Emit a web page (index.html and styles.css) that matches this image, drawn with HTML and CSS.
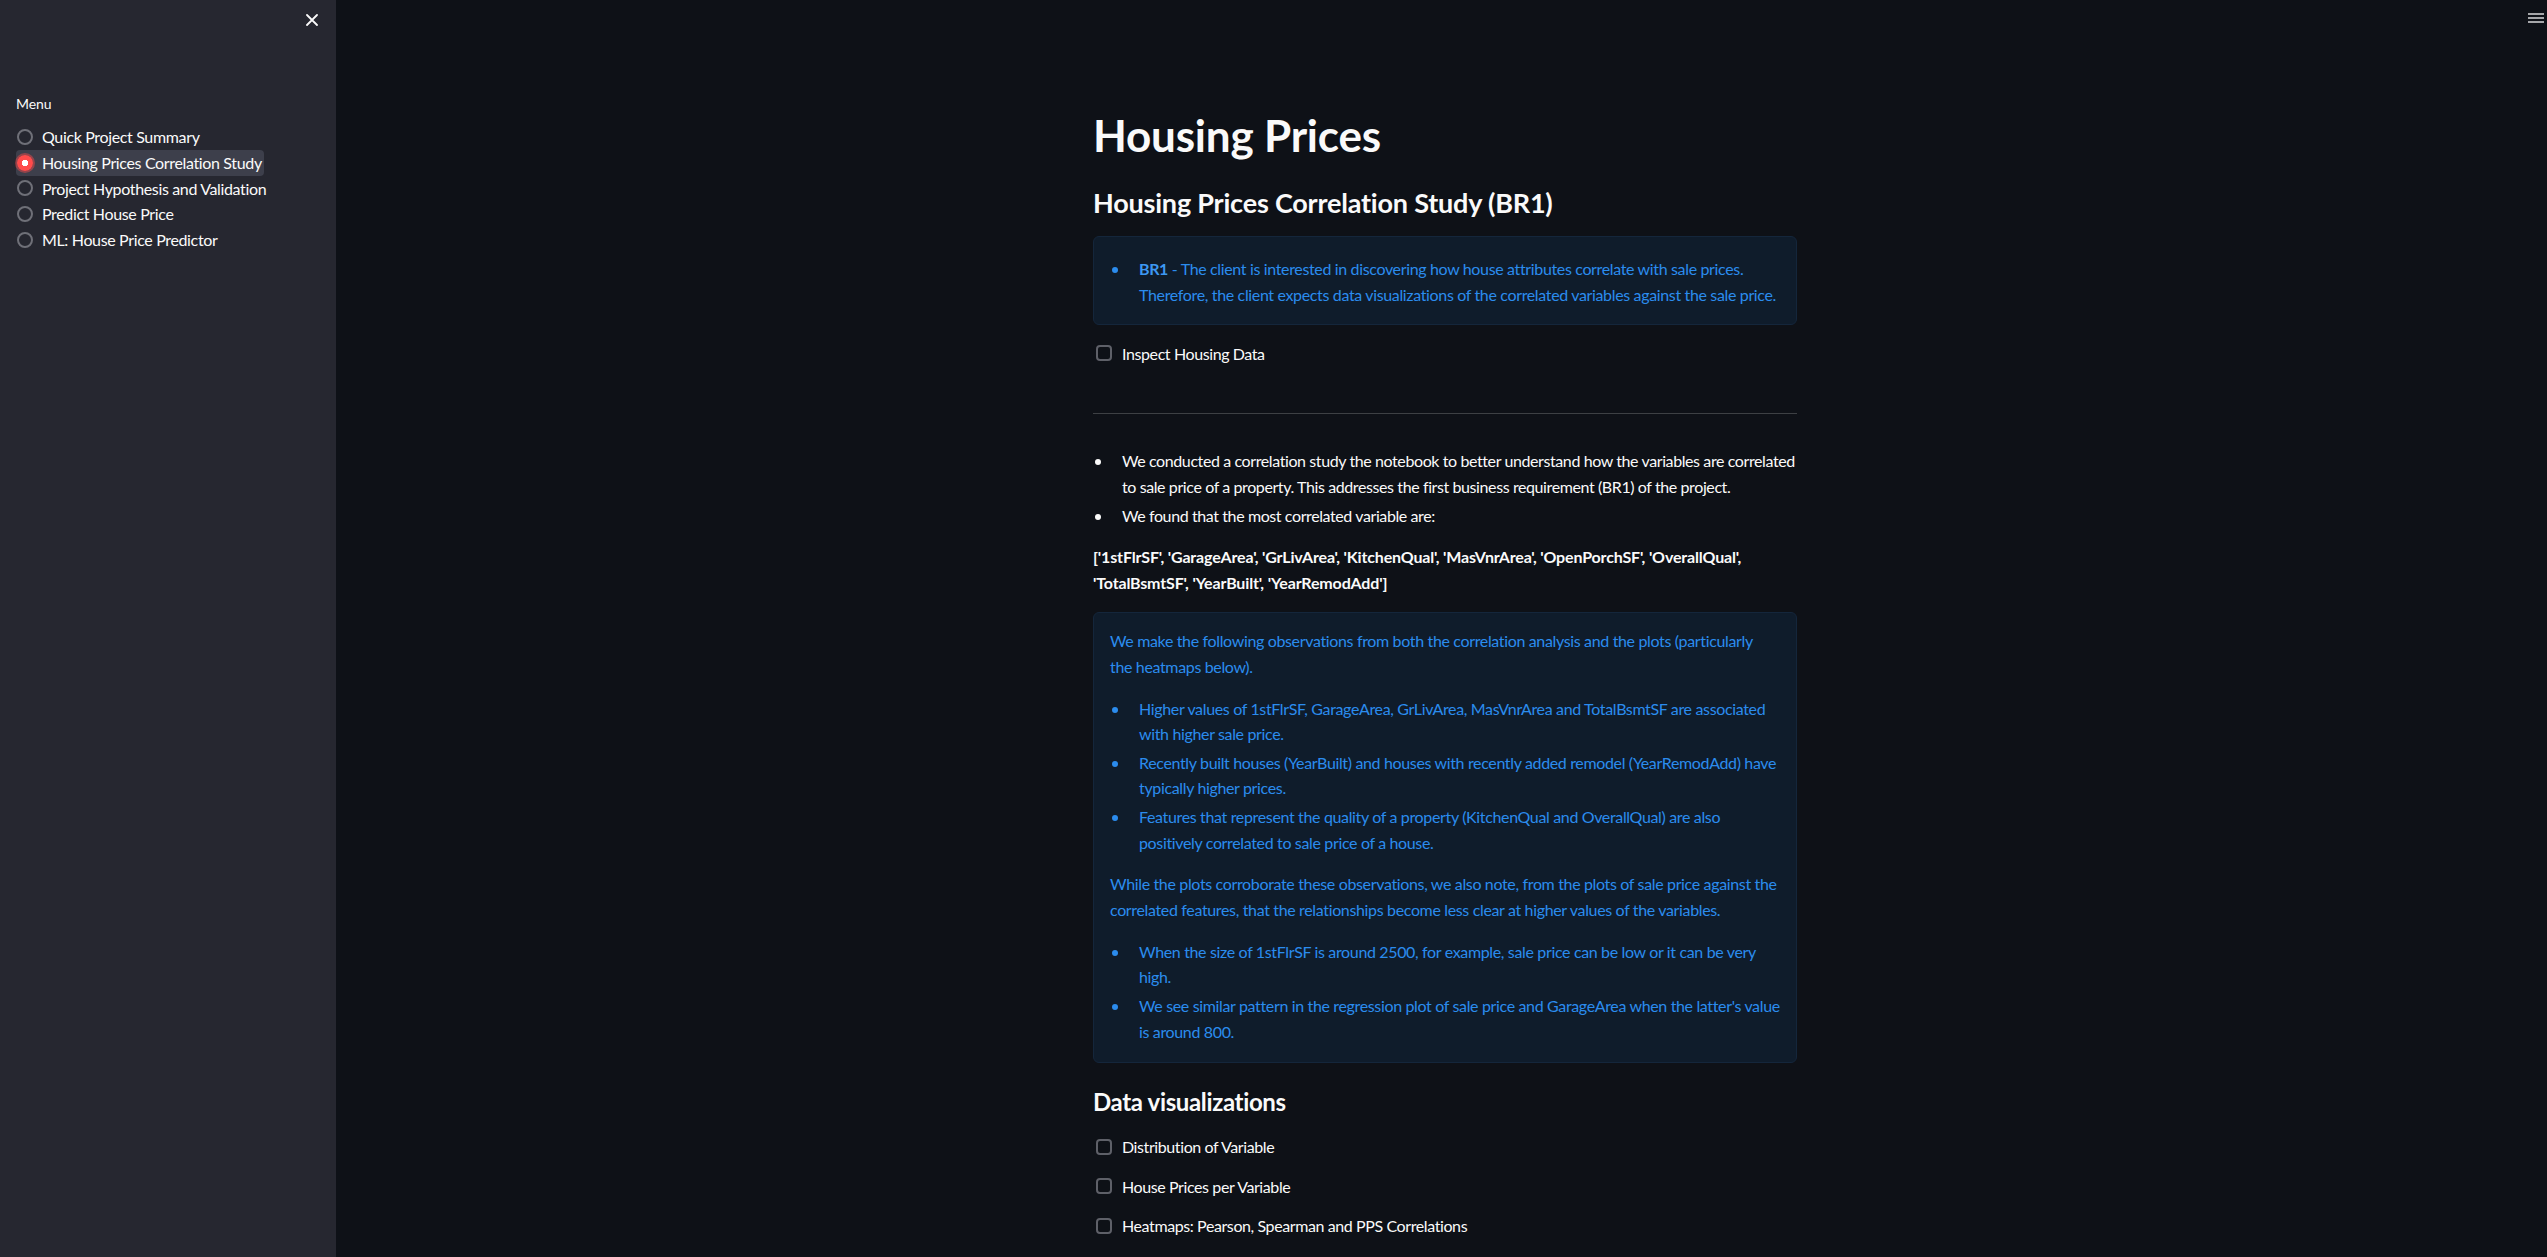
FILE: index.html
```html
<!DOCTYPE html>
<html lang="en">
<head>
<meta charset="utf-8">
<title>Housing Prices</title>
<link rel="stylesheet" href="styles.css">
</head>
<body>
<div class="app">
  <aside class="sidebar">
    <div class="sidebar-head">
      <button class="close-btn" aria-label="Close sidebar">
        <svg width="12" height="12" viewBox="0 0 12 12"><path d="M1 1 L11 11 M11 1 L1 11" stroke="#fafafa" stroke-width="1.8" stroke-linecap="round" fill="none"/></svg>
      </button>
    </div>
    <div class="menu-label">Menu</div>
    <div class="radio-group">
      <div class="radio-row"><label class="radio"><span class="radio-dot"></span><span>Quick Project Summary</span></label></div>
      <div class="radio-row"><label class="radio radio-on"><span class="radio-dot"></span><span>Housing Prices Correlation Study</span></label></div>
      <div class="radio-row"><label class="radio"><span class="radio-dot"></span><span>Project Hypothesis and Validation</span></label></div>
      <div class="radio-row"><label class="radio"><span class="radio-dot"></span><span>Predict House Price</span></label></div>
      <div class="radio-row"><label class="radio"><span class="radio-dot"></span><span>ML: House Price Predictor</span></label></div>
    </div>
  </aside>
  <main class="main">
    <button class="menu-btn" aria-label="Main menu">
      <svg width="16" height="12" viewBox="0 0 16 12"><path d="M0 1 H16 M0 5 H16 M0 9 H16" stroke="#d8d8da" stroke-width="1.6" fill="none"/></svg>
    </button>
    <div class="block">
      <h1 class="title">Housing Prices</h1>
      <h2 class="header">Housing Prices Correlation Study (BR1)</h2>
      <div class="alert alert-first">
        <ul class="list">
          <li><span><strong>BR1</strong> - The client is interested in discovering how house attributes correlate with sale prices.<br>Therefore, the client expects data visualizations of the correlated variables against the sale price.</span></li>
        </ul>
      </div>
      <label class="check check-first"><span class="check-box"></span><span>Inspect Housing Data</span></label>
      <hr class="rule">
      <ul class="list list-main">
        <li><span>We conducted a correlation study the notebook to better understand how the variables are correlated<br>to sale price of a property. This addresses the first business requirement (BR1) of the project.</span></li>
        <li><span>We found that the most correlated variable are:</span></li>
      </ul>
      <p class="vars">['1stFlrSF', 'GarageArea', 'GrLivArea', 'KitchenQual', 'MasVnrArea', 'OpenPorchSF', 'OverallQual',<br>'TotalBsmtSF', 'YearBuilt', 'YearRemodAdd']</p>
      <div class="alert alert-second">
        <p>We make the following observations from both the correlation analysis and the plots (particularly<br>the heatmaps below).</p>
        <ul class="list">
          <li><span>Higher values of 1stFlrSF, GarageArea, GrLivArea, MasVnrArea and TotalBsmtSF are associated<br>with higher sale price.</span></li>
          <li><span>Recently built houses (YearBuilt) and houses with recently added remodel (YearRemodAdd) have<br>typically higher prices.</span></li>
          <li><span>Features that represent the quality of a property (KitchenQual and OverallQual) are also<br>positively correlated to sale price of a house.</span></li>
        </ul>
        <p>While the plots corroborate these observations, we also note, from the plots of sale price against the<br>correlated features, that the relationships become less clear at higher values of the variables.</p>
        <ul class="list">
          <li><span>When the size of 1stFlrSF is around 2500, for example, sale price can be low or it can be very<br>high.</span></li>
          <li><span>We see similar pattern in the regression plot of sale price and GarageArea when the latter's value<br>is around 800.</span></li>
        </ul>
      </div>
      <h3 class="subheader">Data visualizations</h3>
      <div class="checks">
        <label class="check"><span class="check-box"></span><span>Distribution of Variable</span></label>
        <label class="check"><span class="check-box"></span><span>House Prices per Variable</span></label>
        <label class="check"><span class="check-box"></span><span>Heatmaps: Pearson, Spearman and PPS Correlations</span></label>
      </div>
    </div>
  </main>
</div>
</body>
</html>
```
FILE: styles.css
```css
* { box-sizing: border-box; }
html, body { margin: 0; height: 100%; }
body {
  background: #0e1117;
  color: #fafafa;
  font-family: Lato, "Liberation Sans", sans-serif;
  font-size: 16px;
  line-height: 25.6px;
  letter-spacing: -0.4px;
  overflow: hidden;
}
.app { display: flex; height: 100vh; }

/* Sidebar */
.sidebar {
  width: 336px;
  flex: none;
  background: #262730;
  padding: 0 16px;
}
.sidebar-head {
  height: 40px;
  display: flex;
  justify-content: flex-end;
  align-items: center;
  margin-right: -4px;
}
.close-btn {
  width: 24px; height: 24px;
  display: flex; align-items: center; justify-content: center;
  background: none; border: 0; padding: 0;
}
.menu-label {
  margin-top: 53px;
  font-size: 14px;
  line-height: 22.4px;
  letter-spacing: -0.1px;
}
.radio-group { margin-top: 9px; display: flex; flex-direction: column; }
.radio-row { height: 25.6px; display: flex; }
.radio {
  display: inline-flex;
  align-items: center;
  gap: 9px;
  padding: 0 2px 0 1px;
  border-radius: 4px;
  font-size: 16px;
  letter-spacing: -0.35px;
}
.radio-dot {
  width: 16px; height: 16px;
  border-radius: 50%;
  border: 2px solid #6f7078;
  background: #262730;
  flex: none;
}
.radio-on { background: #3d3f4b; }
.radio-on .radio-dot {
  border: 0;
  background: radial-gradient(circle, #ffffff 0 3px, #ff4b4b 3.5px);
  box-shadow: 0 0 0 2px rgba(255, 75, 75, 0.45);
}

/* Main */
.main {
  flex: 1;
  position: relative;
  display: flex;
  justify-content: center;
  padding-left: 7px;
}
.menu-btn {
  position: absolute;
  top: 13px; right: 3px;
  background: none; border: 0; padding: 0;
  width: 16px; height: 12px;
}
.menu-btn svg { display: block; }
.block { width: 704px; padding-top: 109px; }

.title {
  margin: 0;
  font-size: 44px;
  line-height: 52.8px;
  font-weight: 700;
  letter-spacing: -0.2px;
}
.header {
  margin: 24px 0 0;
  font-size: 27px;
  line-height: 33.6px;
  font-weight: 700;
  letter-spacing: -0.2px;
}
.subheader {
  margin: 25px 0 0;
  font-size: 24px;
  line-height: 28.8px;
  font-weight: 700;
  letter-spacing: -0.35px;
}

.alert {
  background: #0f1c2b;
  border: 1px solid #14263b;
  border-radius: 6px;
  color: #2b8cee;
  padding: 0 16px;
  letter-spacing: -0.35px;
}
.alert p { margin: 0 0 16px; white-space: nowrap; }
.alert strong { font-weight: 700; color: #3d98f2; }
.alert-first { margin-top: 17px; padding-top: 19px; padding-bottom: 16px; }
.alert-second { margin-top: 17px; padding-top: 15px; padding-bottom: 18px; }
.alert > :last-child { margin-bottom: 0; }

.list { list-style: none; margin: 0 0 16px; padding: 0; }
.list li {
  display: grid;
  grid-template-columns: 29px 1fr;
  margin-bottom: 3.2px;
  white-space: nowrap;
}
.list li:last-child { margin-bottom: 0; }
.list li::before {
  content: "";
  width: 6px; height: 6px;
  border-radius: 50%;
  background: currentColor;
  margin: 11px 0 0 2px;
}
.list-main { margin-top: 34px; margin-bottom: 0; letter-spacing: -0.4px; }

.check {
  display: flex;
  align-items: center;
  gap: 10px;
  height: 25.6px;
  padding-left: 3px;
}
.check-first { margin-top: 16px; }
.check-box {
  width: 16px; height: 16px;
  border: 2px solid #5e6068;
  border-radius: 4px;
  flex: none;
}
.checks { margin-top: 17px; display: flex; flex-direction: column; gap: 14px; }

.rule {
  margin: 47px 0 0;
  border: 0;
  height: 1px;
  background: #3d4044;
}
.vars {
  margin: 16px 0 0;
  font-weight: 700;
  letter-spacing: -0.15px;
  white-space: nowrap;
}
```
